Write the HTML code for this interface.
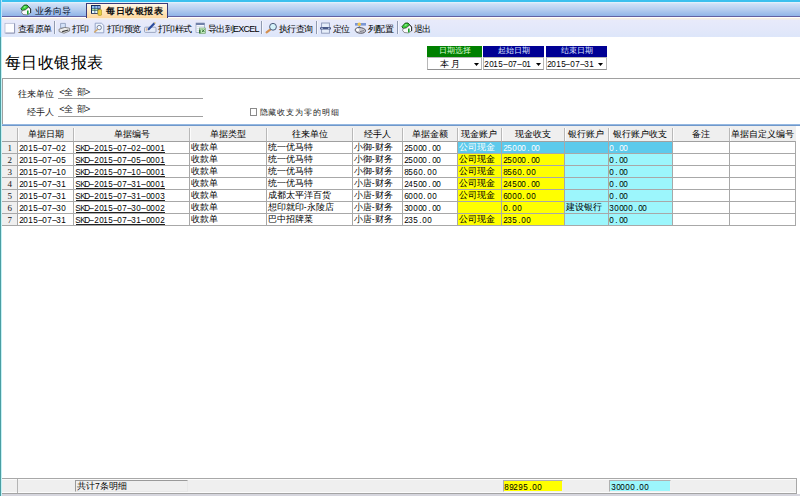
<!DOCTYPE html>
<html><head><meta charset="utf-8">
<style>
*{margin:0;padding:0;box-sizing:border-box}
html,body{width:800px;height:496px;overflow:hidden;background:#fff;font-family:"Liberation Sans",sans-serif;color:#000}
.a{position:absolute;white-space:nowrap}
#tealL{left:0;top:36.5px;width:2px;height:460px;background:linear-gradient(90deg,#4a9ea2 0,#4a9ea2 50%,#c4f2f6 50%,#c4f2f6 100%)}
#cyL{left:0;top:0;width:2px;height:36.5px;background:linear-gradient(90deg,#48bce8 0,#48bce8 55%,#bfe6fa 55%,#bfe6fa 100%)}
#topc{left:0;top:0;width:800px;height:2px;background:#3cc0ee}
#tabs{left:0;top:2px;width:800px;height:14.5px;background:linear-gradient(#e6f6ff 0,#d0e0f6 12%,#b6cef0 50%,#8ab0e6 100%)}
#tabline{left:0;top:16.1px;width:800px;height:1.4px;background:#6262a2}
#tb{left:0;top:17.5px;width:800px;height:19px;background:linear-gradient(#faf0da 0,#e8eafa 12%,#e3e8fa 60%,#dde6fa 100%)}
#atab{left:86px;top:3px;width:82px;height:15px;border:1.3px solid #3a3a78;border-bottom:none;background:linear-gradient(#fff6e6,#ffe6bc 60%,#ffd89c)}
.tbt{font-size:9px;letter-spacing:-0.7px;line-height:10px;color:#000;font-weight:500}
.sep{width:1px;height:13px;background:#909ab0;top:21.3px;box-shadow:1px 0 0 #f4f6fc}
.mono{font-family:"Liberation Mono",monospace;font-size:9px;line-height:11px;letter-spacing:-0.69px}
.cj{font-size:8.7px;line-height:11px;font-weight:500}
.nm{font-size:9px;line-height:11px}
.nm i{font-style:normal;display:inline-block;width:4.71px;text-align:center;transform:scaleX(.9)}
.hd{font-size:8.7px;line-height:12px;text-align:center;color:#000;font-weight:500}
.lbl{font-size:9px;line-height:11px;color:#222}
</style></head><body>
<div class="a" id="tabs"></div>
<div class="a" id="tabline"></div>
<div class="a" id="tb"></div>
<div class="a" id="atab"></div>
<div class="a" id="topc"></div>

<!-- tab texts -->
<div class="a" style="left:35px;top:5px;font-size:9.4px;line-height:12px;color:#08122c;font-weight:500">业务向导</div>
<div class="a" style="left:106px;top:5px;font-size:9.4px;letter-spacing:0.5px;line-height:12px;font-weight:bold;color:#101010">每日收银报表</div>

<!-- toolbar texts -->
<div class="a tbt" style="left:18px;top:23.8px">查看原单</div>
<div class="a sep" style="left:54px"></div>
<div class="a tbt" style="left:72px;top:23.8px">打印</div>
<div class="a tbt" style="left:107px;top:23.8px">打印预览</div>
<div class="a tbt" style="left:158px;top:23.8px">打印样式</div>
<div class="a tbt" style="left:208px;top:23.8px">导出到EXCEL</div>
<div class="a sep" style="left:261px"></div>
<div class="a tbt" style="left:279px;top:23.8px">执行查询</div>
<div class="a sep" style="left:315.5px"></div>
<div class="a tbt" style="left:333px;top:23.8px">定位</div>
<div class="a tbt" style="left:368px;top:23.8px">列配置</div>
<div class="a sep" style="left:396.5px"></div>
<div class="a tbt" style="left:414px;top:23.8px">退出</div>


<!-- icons -->
<svg class="a" style="left:17.6px;top:2.1px" width="16" height="16" viewBox="0 0 16 16"><path d="M3 6.6L6.2 3.1L9 3L10.8 5L7.2 8L4.2 8.6Z" fill="#3ccf3c" stroke="#0e4a10" stroke-width="0.9" stroke-linejoin="round"/><path d="M5.2 5.2L6.8 4L8.4 4.4L6.6 6Z" fill="#8af08a"/><path d="M4.2 8.6L7.2 8L10.8 5L12.6 7L12.6 11L9.2 12.9L5.2 12.5L3.6 10.4Z" fill="#fafafa" stroke="#4a4a4a" stroke-width="0.6" stroke-linejoin="round"/><path d="M9 8.6H10.6V12.2L9 12.6Z" fill="#16a028"/><path d="M10.8 5L12.6 7V11" fill="none" stroke="#202020" stroke-width="0.9"/></svg>
<svg class="a" style="left:86px;top:2px" width="16" height="16" viewBox="0 0 16 16">
<rect x="5" y="3" width="9.5" height="8.8" fill="#152a5a"/>
<rect x="6" y="4" width="2.6" height="2.4" fill="#8cc0f4"/><rect x="9.2" y="4" width="2.4" height="2.4" fill="#8cc0f4"/><rect x="12.2" y="4" width="1.6" height="2.4" fill="#a8c8ff"/>
<rect x="6" y="6.8" width="2.6" height="1.8" fill="#a8e0a0"/><rect x="9.2" y="6.8" width="2.4" height="1.8" fill="#a8e0a0"/>
<rect x="6" y="9" width="2.6" height="2" fill="#e8fcff"/><rect x="9.2" y="9" width="2.4" height="2" fill="#e8fcff"/>
<rect x="11.9" y="7.6" width="3.8" height="5.8" rx="1.2" fill="#e8d040" stroke="#a88a20" stroke-width="0.6"/>
</svg>
<svg class="a" style="left:2px;top:20px" width="16" height="16" viewBox="0 0 16 16">
<rect x="3" y="3.3" width="9.6" height="9.8" fill="#fdfdff" stroke="#aab2cc" stroke-width="0.7"/>
<path d="M12.6 3.5V13.1H3.5" fill="none" stroke="#8a92b0" stroke-width="0.9"/>
</svg>
<svg class="a" style="left:56px;top:20px" width="16" height="16" viewBox="0 0 16 16">
<path d="M4.6 3.4H9.4V8H4.6Z" fill="#d4e2f8" stroke="#8898b8" stroke-width="0.8"/>
<path d="M3 9.2L8.8 7.4L13.6 8.2V11L8 13.2L3.2 11.6Z" fill="#ececec" stroke="#707070" stroke-width="0.8" stroke-linejoin="round"/>
<path d="M6.2 11.6L12.4 10" stroke="#383838" stroke-width="1.1"/>
</svg>
<svg class="a" style="left:92px;top:20px" width="16" height="16" viewBox="0 0 16 16">
<path d="M3.2 3.2H9.4L11.8 5.4V12.8H3.2Z" fill="#eef4fc" stroke="#8494bc" stroke-width="0.8"/>
<circle cx="7.2" cy="7.6" r="2.2" fill="#f4f8ff" stroke="#5a6888" stroke-width="0.8"/>
<path d="M5.6 9.4L2.6 12" stroke="#d4a868" stroke-width="1.4" stroke-linecap="round"/>
</svg>
<svg class="a" style="left:142px;top:20px" width="16" height="16" viewBox="0 0 16 16">
<rect x="2.5" y="7.2" width="11.5" height="5.2" rx="1" fill="#e4ecfa" stroke="#8a96b4" stroke-width="0.8"/>
<path d="M6.6 9.2L12.2 3.4" stroke="#2c4c9c" stroke-width="2.2" stroke-linecap="round"/>
<circle cx="13" cy="2.8" r="0.9" fill="#f0d890"/>
<rect x="3.8" y="8.2" width="1.6" height="2.6" fill="#e0b898"/>
</svg>
<svg class="a" style="left:193px;top:20px" width="16" height="16" viewBox="0 0 16 16">
<rect x="3" y="3" width="8.6" height="9.4" fill="#f4f8fc" stroke="#8090b0" stroke-width="0.6"/>
<rect x="3" y="3" width="8.6" height="2" fill="#7080a8"/>
<path d="M3.4 6.6H11M3.4 8.6H11M3.4 10.6H6" stroke="#c8d0e0" stroke-width="0.6"/>
<rect x="6.6" y="8" width="5.8" height="5.6" fill="#c4ecc0" stroke="#6a9a6a" stroke-width="0.6"/>
<rect x="6" y="9.6" width="1.6" height="3.6" fill="#3a7a3a"/>
<path d="M9 9.4L11.6 12.2M11.4 9.4L9 12.2" stroke="#2a6a2a" stroke-width="0.9"/>
</svg>
<svg class="a" style="left:263px;top:20px" width="16" height="16" viewBox="0 0 16 16">
<path d="M7.2 9.6L3.6 12.4" stroke="#d49050" stroke-width="2.2" stroke-linecap="round"/>
<circle cx="10" cy="6.8" r="3.4" fill="#d4f2fa" stroke="#4a5a7a" stroke-width="1"/>
</svg>
<svg class="a" style="left:318px;top:20px" width="16" height="16" viewBox="0 0 16 16">
<rect x="3.6" y="3" width="7.8" height="10.2" fill="#e6eefa" stroke="#8a96b6" stroke-width="0.9"/>
<rect x="2" y="7" width="11" height="2.6" rx="1.2" fill="#4a5a88"/>
<rect x="3.2" y="7.8" width="1.6" height="1" fill="#c8d4f0"/><rect x="10" y="7.8" width="1.6" height="1" fill="#c8d4f0"/>
</svg>
<svg class="a" style="left:352px;top:20px" width="16" height="16" viewBox="0 0 16 16">
<rect x="3" y="3" width="11" height="2.6" fill="#7a96d4"/>
<circle cx="7.3" cy="4.3" r="1.7" fill="#f2c64a"/>
<path d="M7.4 6V8.5" stroke="#6a9ae0" stroke-width="1.4"/>
<path d="M3.4 9.2C4.2 7.4 7 7.2 9.6 7.8C12.4 8.4 14 9.6 13.4 11.4C12.6 13.2 9.4 13.6 6.6 13C4.2 12.4 2.8 11 3.4 9.2Z" fill="#c8c8d0" stroke="#4a4a56" stroke-width="0.9"/>
<ellipse cx="5.6" cy="9.8" rx="1.5" ry="1.5" fill="#fff"/>
<path d="M8 11.6L12 10.6" stroke="#6a6a74" stroke-width="0.8"/>
</svg>
<svg class="a" style="left:399px;top:20px" width="16" height="16" viewBox="0 0 16 16"><path d="M3 6.6L6.2 3.1L9 3L10.8 5L7.2 8L4.2 8.6Z" fill="#3ccf3c" stroke="#0e4a10" stroke-width="0.9" stroke-linejoin="round"/><path d="M5.2 5.2L6.8 4L8.4 4.4L6.6 6Z" fill="#8af08a"/><path d="M4.2 8.6L7.2 8L10.8 5L12.6 7L12.6 11L9.2 12.9L5.2 12.5L3.6 10.4Z" fill="#fafafa" stroke="#4a4a4a" stroke-width="0.6" stroke-linejoin="round"/><path d="M9 8.6H10.6V12.2L9 12.6Z" fill="#16a028"/><path d="M10.8 5L12.6 7V11" fill="none" stroke="#202020" stroke-width="0.9"/></svg>

<!-- title -->
<div class="a" style="left:5px;top:51.5px;font-size:16.4px;letter-spacing:0.4px;line-height:20px;color:#000;font-weight:500">每日收银报表</div>

<!-- date selector -->
<div class="a" style="left:427px;top:46px;width:55px;height:10.5px;background:#008000"></div>
<div class="a" style="left:483px;top:46px;width:61.2px;height:10.5px;background:#000094"></div>
<div class="a" style="left:546px;top:46px;width:61px;height:10.5px;background:#000094"></div>
<div class="a" style="left:427px;top:45px;width:55px;text-align:center;font-size:8.1px;line-height:12px;color:#dcffd4;font-weight:500">日期选择</div>
<div class="a" style="left:483px;top:45px;width:61.2px;text-align:center;font-size:8.1px;line-height:12px;color:#dce4ff;font-weight:500">起始日期</div>
<div class="a" style="left:546px;top:45px;width:61px;text-align:center;font-size:8.1px;line-height:12px;color:#dce4ff;font-weight:500">结束日期</div>
<div class="a" style="left:427px;top:57px;width:55px;height:13px;border:1px solid #b8b8b8;border-bottom-color:#909090"></div>
<div class="a" style="left:483px;top:57px;width:61.2px;height:13px;border:1px solid #b8b8b8;border-bottom-color:#909090"></div>
<div class="a" style="left:546px;top:57px;width:61px;height:13px;border:1px solid #b8b8b8;border-bottom-color:#909090"></div>
<div class="a cj" style="left:440px;top:58.5px;letter-spacing:1.5px">本月</div>
<div class="a nm" style="left:484px;top:58.6px"><i>2</i><i>0</i><i>1</i><i>5</i><i>&#8211;</i><i>0</i><i>7</i><i>&#8211;</i><i>0</i><i>1</i></div>
<div class="a nm" style="left:546.6px;top:58.6px"><i>2</i><i>0</i><i>1</i><i>5</i><i>&#8211;</i><i>0</i><i>7</i><i>&#8211;</i><i>3</i><i>1</i></div>
<svg class="a" style="left:473.5px;top:62.5px" width="5" height="3"><path d="M0 0H5L2.5 3Z" fill="#000"/></svg>
<svg class="a" style="left:536px;top:62.5px" width="5" height="3"><path d="M0 0H5L2.5 3Z" fill="#000"/></svg>
<svg class="a" style="left:598px;top:62.5px" width="5" height="3"><path d="M0 0H5L2.5 3Z" fill="#000"/></svg>

<!-- filter box -->
<div class="a" style="left:2px;top:78px;width:798px;height:1px;background:#a0a0a0"></div>
<div class="a" style="left:2px;top:78px;width:1px;height:47px;background:#a0a0a0"></div>
<div class="a lbl" style="left:18px;top:89px">往来单位</div>
<div class="a lbl" style="left:27px;top:106.5px">经手人</div>
<div class="a lbl" style="left:59.3px;top:87px;letter-spacing:-0.5px;color:#222">&lt;全&nbsp;&nbsp;部&gt;</div>
<div class="a lbl" style="left:59.3px;top:104px;letter-spacing:-0.5px;color:#222">&lt;全&nbsp;&nbsp;部&gt;</div>
<div class="a" style="left:57.5px;top:98px;width:145.5px;height:1px;background:#a0a0a0"></div>
<div class="a" style="left:57.5px;top:116px;width:145.5px;height:1px;background:#a0a0a0"></div>
<div class="a" style="left:249.5px;top:108px;width:7.2px;height:7.5px;border:0.9px solid #8a8a8a;background:#fff"></div>
<div class="a lbl" style="left:259.5px;top:107px;font-size:8.2px;letter-spacing:0.9px;color:#1a1a1a">隐藏收支为零的明细</div>

<div class="a" style="left:1.3px;top:126px;width:795px;height:15px;background:#efefef"></div>
<div class="a" style="left:2px;top:124.2px;width:798px;height:1.8px;background:linear-gradient(#a8c8ec,#5c88c0)"></div>
<div class="a" style="left:2px;top:141.2px;width:15.5px;height:12px;background:#efefef"></div>
<div class="a" style="left:457.5px;top:141.2px;width:43.8px;height:12px;background:#5ccaec"></div>
<div class="a" style="left:501.3px;top:141.2px;width:63.2px;height:12px;background:#5ccaec"></div>
<div class="a" style="left:564.5px;top:141.2px;width:43.6px;height:12px;background:#5ccaec"></div>
<div class="a" style="left:608.1px;top:141.2px;width:64.2px;height:12px;background:#5ccaec"></div>
<div class="a" style="left:2px;top:153.2px;width:15.5px;height:12px;background:#efefef"></div>
<div class="a" style="left:457.5px;top:153.2px;width:43.8px;height:12px;background:#ffff00"></div>
<div class="a" style="left:501.3px;top:153.2px;width:63.2px;height:12px;background:#ffff00"></div>
<div class="a" style="left:564.5px;top:153.2px;width:43.6px;height:12px;background:#9cf6fc"></div>
<div class="a" style="left:608.1px;top:153.2px;width:64.2px;height:12px;background:#9cf6fc"></div>
<div class="a" style="left:2px;top:165.2px;width:15.5px;height:12px;background:#efefef"></div>
<div class="a" style="left:457.5px;top:165.2px;width:43.8px;height:12px;background:#ffff00"></div>
<div class="a" style="left:501.3px;top:165.2px;width:63.2px;height:12px;background:#ffff00"></div>
<div class="a" style="left:564.5px;top:165.2px;width:43.6px;height:12px;background:#9cf6fc"></div>
<div class="a" style="left:608.1px;top:165.2px;width:64.2px;height:12px;background:#9cf6fc"></div>
<div class="a" style="left:2px;top:177.2px;width:15.5px;height:12px;background:#efefef"></div>
<div class="a" style="left:457.5px;top:177.2px;width:43.8px;height:12px;background:#ffff00"></div>
<div class="a" style="left:501.3px;top:177.2px;width:63.2px;height:12px;background:#ffff00"></div>
<div class="a" style="left:564.5px;top:177.2px;width:43.6px;height:12px;background:#9cf6fc"></div>
<div class="a" style="left:608.1px;top:177.2px;width:64.2px;height:12px;background:#9cf6fc"></div>
<div class="a" style="left:2px;top:189.2px;width:15.5px;height:12px;background:#efefef"></div>
<div class="a" style="left:457.5px;top:189.2px;width:43.8px;height:12px;background:#ffff00"></div>
<div class="a" style="left:501.3px;top:189.2px;width:63.2px;height:12px;background:#ffff00"></div>
<div class="a" style="left:564.5px;top:189.2px;width:43.6px;height:12px;background:#9cf6fc"></div>
<div class="a" style="left:608.1px;top:189.2px;width:64.2px;height:12px;background:#9cf6fc"></div>
<div class="a" style="left:2px;top:201.2px;width:15.5px;height:12px;background:#efefef"></div>
<div class="a" style="left:457.5px;top:201.2px;width:43.8px;height:12px;background:#ffff00"></div>
<div class="a" style="left:501.3px;top:201.2px;width:63.2px;height:12px;background:#ffff00"></div>
<div class="a" style="left:564.5px;top:201.2px;width:43.6px;height:12px;background:#9cf6fc"></div>
<div class="a" style="left:608.1px;top:201.2px;width:64.2px;height:12px;background:#9cf6fc"></div>
<div class="a" style="left:2px;top:213.2px;width:15.5px;height:12px;background:#efefef"></div>
<div class="a" style="left:457.5px;top:213.2px;width:43.8px;height:12px;background:#ffff00"></div>
<div class="a" style="left:501.3px;top:213.2px;width:63.2px;height:12px;background:#ffff00"></div>
<div class="a" style="left:564.5px;top:213.2px;width:43.6px;height:12px;background:#9cf6fc"></div>
<div class="a" style="left:608.1px;top:213.2px;width:64.2px;height:12px;background:#9cf6fc"></div>
<div class="a" style="left:1.3px;top:141px;width:794.7px;height:1px;background:#a0a0a0"></div>
<div class="a" style="left:17px;top:128px;width:1px;height:13px;background:#b8b8b8"></div><div class="a" style="left:18px;top:128px;width:1px;height:13px;background:#fcfcfc"></div>
<div class="a" style="left:73px;top:128px;width:1px;height:13px;background:#b8b8b8"></div><div class="a" style="left:74px;top:128px;width:1px;height:13px;background:#fcfcfc"></div>
<div class="a" style="left:189px;top:128px;width:1px;height:13px;background:#b8b8b8"></div><div class="a" style="left:190px;top:128px;width:1px;height:13px;background:#fcfcfc"></div>
<div class="a" style="left:266px;top:128px;width:1px;height:13px;background:#b8b8b8"></div><div class="a" style="left:267px;top:128px;width:1px;height:13px;background:#fcfcfc"></div>
<div class="a" style="left:352px;top:128px;width:1px;height:13px;background:#b8b8b8"></div><div class="a" style="left:353px;top:128px;width:1px;height:13px;background:#fcfcfc"></div>
<div class="a" style="left:402px;top:128px;width:1px;height:13px;background:#b8b8b8"></div><div class="a" style="left:403px;top:128px;width:1px;height:13px;background:#fcfcfc"></div>
<div class="a" style="left:457px;top:128px;width:1px;height:13px;background:#b8b8b8"></div><div class="a" style="left:458px;top:128px;width:1px;height:13px;background:#fcfcfc"></div>
<div class="a" style="left:501px;top:128px;width:1px;height:13px;background:#b8b8b8"></div><div class="a" style="left:502px;top:128px;width:1px;height:13px;background:#fcfcfc"></div>
<div class="a" style="left:564px;top:128px;width:1px;height:13px;background:#b8b8b8"></div><div class="a" style="left:565px;top:128px;width:1px;height:13px;background:#fcfcfc"></div>
<div class="a" style="left:608px;top:128px;width:1px;height:13px;background:#b8b8b8"></div><div class="a" style="left:609px;top:128px;width:1px;height:13px;background:#fcfcfc"></div>
<div class="a" style="left:672px;top:128px;width:1px;height:13px;background:#b8b8b8"></div><div class="a" style="left:673px;top:128px;width:1px;height:13px;background:#fcfcfc"></div>
<div class="a" style="left:729px;top:128px;width:1px;height:13px;background:#b8b8b8"></div><div class="a" style="left:730px;top:128px;width:1px;height:13px;background:#fcfcfc"></div>
<div class="a" style="left:76px;top:151.5px;width:88.6px;height:0.9px;background:#222"></div>
<div class="a" style="left:1.3px;top:153px;width:794.7px;height:1px;background:#a8a8a8"></div>
<div class="a" style="left:76px;top:163.5px;width:88.6px;height:0.9px;background:#222"></div>
<div class="a" style="left:1.3px;top:165px;width:794.7px;height:1px;background:#a8a8a8"></div>
<div class="a" style="left:76px;top:175.5px;width:88.6px;height:0.9px;background:#222"></div>
<div class="a" style="left:1.3px;top:177px;width:794.7px;height:1px;background:#a8a8a8"></div>
<div class="a" style="left:76px;top:187.5px;width:88.6px;height:0.9px;background:#222"></div>
<div class="a" style="left:1.3px;top:189px;width:794.7px;height:1px;background:#a8a8a8"></div>
<div class="a" style="left:76px;top:199.5px;width:88.6px;height:0.9px;background:#222"></div>
<div class="a" style="left:1.3px;top:201px;width:794.7px;height:1px;background:#a8a8a8"></div>
<div class="a" style="left:76px;top:211.5px;width:88.6px;height:0.9px;background:#222"></div>
<div class="a" style="left:1.3px;top:213px;width:794.7px;height:1px;background:#a8a8a8"></div>
<div class="a" style="left:76px;top:223.5px;width:88.6px;height:0.9px;background:#222"></div>
<div class="a" style="left:1.3px;top:225px;width:794.7px;height:1px;background:#a8a8a8"></div>
<div class="a" style="left:17px;top:141px;width:1px;height:85px;background:#a8a8a8"></div>
<div class="a" style="left:73px;top:141px;width:1px;height:85px;background:#a8a8a8"></div>
<div class="a" style="left:189px;top:141px;width:1px;height:85px;background:#a8a8a8"></div>
<div class="a" style="left:266px;top:141px;width:1px;height:85px;background:#a8a8a8"></div>
<div class="a" style="left:352px;top:141px;width:1px;height:85px;background:#a8a8a8"></div>
<div class="a" style="left:402px;top:141px;width:1px;height:85px;background:#a8a8a8"></div>
<div class="a" style="left:457px;top:141px;width:1px;height:85px;background:#a8a8a8"></div>
<div class="a" style="left:501px;top:141px;width:1px;height:85px;background:#a8a8a8"></div>
<div class="a" style="left:564px;top:141px;width:1px;height:85px;background:#a8a8a8"></div>
<div class="a" style="left:608px;top:141px;width:1px;height:85px;background:#a8a8a8"></div>
<div class="a" style="left:672px;top:141px;width:1px;height:85px;background:#a8a8a8"></div>
<div class="a" style="left:729px;top:141px;width:1px;height:85px;background:#a8a8a8"></div>
<div class="a" style="left:795px;top:141px;width:1px;height:85px;background:#a8a8a8"></div>
<div class="a hd" style="left:17.5px;top:127.5px;width:56.3px">单据日期</div>
<div class="a hd" style="left:73.8px;top:127.5px;width:115.7px">单据编号</div>
<div class="a hd" style="left:189.5px;top:127.5px;width:77px">单据类型</div>
<div class="a hd" style="left:266.5px;top:127.5px;width:86px">往来单位</div>
<div class="a hd" style="left:352.5px;top:127.5px;width:49.8px">经手人</div>
<div class="a hd" style="left:402.3px;top:127.5px;width:55.2px">单据金额</div>
<div class="a hd" style="left:457.5px;top:127.5px;width:43.8px">现金账户</div>
<div class="a hd" style="left:501.3px;top:127.5px;width:63.2px">现金收支</div>
<div class="a hd" style="left:564.5px;top:127.5px;width:43.6px">银行账户</div>
<div class="a hd" style="left:608.1px;top:127.5px;width:64.2px">银行账户收支</div>
<div class="a hd" style="left:672.3px;top:127.5px;width:57.2px">备注</div>
<div class="a hd" style="left:729.5px;top:127.5px;width:66.5px">单据自定义编号</div>
<div class="a nm" style="left:2px;top:142.5px;width:15.5px;text-align:center;font-family:'Liberation Serif',serif;font-size:9px;color:#1a1a1a">1</div>
<div class="a nm" style="left:18.7px;top:142.8px;color:#000;"><i>2</i><i>0</i><i>1</i><i>5</i><i>&#8211;</i><i>0</i><i>7</i><i>&#8211;</i><i>0</i><i>2</i></div>
<div class="a nm" style="left:75px;top:142.8px;color:#000;"><i>S</i><i>K</i><i>D</i><i>&#8211;</i><i>2</i><i>0</i><i>1</i><i>5</i><i>&#8211;</i><i>0</i><i>7</i><i>&#8211;</i><i>0</i><i>2</i><i>&#8211;</i><i>0</i><i>0</i><i>0</i><i>1</i></div>
<div class="a cj" style="left:190.7px;top:142px;color:#000;">收款单</div>
<div class="a cj" style="left:267.7px;top:142px;color:#000;">统一优马特</div>
<div class="a cj" style="left:353.7px;top:142px;color:#000;">小御-财务</div>
<div class="a nm" style="left:403.5px;top:142.8px;color:#000;"><i>2</i><i>5</i><i>0</i><i>0</i><i>0</i><i>.</i><i>0</i><i>0</i></div>
<div class="a cj" style="left:458.7px;top:142px;color:#fff;">公司现金</div>
<div class="a nm" style="left:502.5px;top:142.8px;color:#fff;"><i>2</i><i>5</i><i>0</i><i>0</i><i>0</i><i>.</i><i>0</i><i>0</i></div>
<div class="a nm" style="left:609.3px;top:142.8px;color:#fff;"><i>0</i><i>.</i><i>0</i><i>0</i></div>
<div class="a nm" style="left:2px;top:154.5px;width:15.5px;text-align:center;font-family:'Liberation Serif',serif;font-size:9px;color:#1a1a1a">2</div>
<div class="a nm" style="left:18.7px;top:154.8px;color:#000;"><i>2</i><i>0</i><i>1</i><i>5</i><i>&#8211;</i><i>0</i><i>7</i><i>&#8211;</i><i>0</i><i>5</i></div>
<div class="a nm" style="left:75px;top:154.8px;color:#000;"><i>S</i><i>K</i><i>D</i><i>&#8211;</i><i>2</i><i>0</i><i>1</i><i>5</i><i>&#8211;</i><i>0</i><i>7</i><i>&#8211;</i><i>0</i><i>5</i><i>&#8211;</i><i>0</i><i>0</i><i>0</i><i>1</i></div>
<div class="a cj" style="left:190.7px;top:154px;color:#000;">收款单</div>
<div class="a cj" style="left:267.7px;top:154px;color:#000;">统一优马特</div>
<div class="a cj" style="left:353.7px;top:154px;color:#000;">小御-财务</div>
<div class="a nm" style="left:403.5px;top:154.8px;color:#000;"><i>2</i><i>5</i><i>0</i><i>0</i><i>0</i><i>.</i><i>0</i><i>0</i></div>
<div class="a cj" style="left:458.7px;top:154px;color:#000;">公司现金</div>
<div class="a nm" style="left:502.5px;top:154.8px;color:#000;"><i>2</i><i>5</i><i>0</i><i>0</i><i>0</i><i>.</i><i>0</i><i>0</i></div>
<div class="a nm" style="left:609.3px;top:154.8px;color:#000;"><i>0</i><i>.</i><i>0</i><i>0</i></div>
<div class="a nm" style="left:2px;top:166.5px;width:15.5px;text-align:center;font-family:'Liberation Serif',serif;font-size:9px;color:#1a1a1a">3</div>
<div class="a nm" style="left:18.7px;top:166.8px;color:#000;"><i>2</i><i>0</i><i>1</i><i>5</i><i>&#8211;</i><i>0</i><i>7</i><i>&#8211;</i><i>1</i><i>0</i></div>
<div class="a nm" style="left:75px;top:166.8px;color:#000;"><i>S</i><i>K</i><i>D</i><i>&#8211;</i><i>2</i><i>0</i><i>1</i><i>5</i><i>&#8211;</i><i>0</i><i>7</i><i>&#8211;</i><i>1</i><i>0</i><i>&#8211;</i><i>0</i><i>0</i><i>0</i><i>1</i></div>
<div class="a cj" style="left:190.7px;top:166px;color:#000;">收款单</div>
<div class="a cj" style="left:267.7px;top:166px;color:#000;">统一优马特</div>
<div class="a cj" style="left:353.7px;top:166px;color:#000;">小御-财务</div>
<div class="a nm" style="left:403.5px;top:166.8px;color:#000;"><i>8</i><i>5</i><i>6</i><i>0</i><i>.</i><i>0</i><i>0</i></div>
<div class="a cj" style="left:458.7px;top:166px;color:#000;">公司现金</div>
<div class="a nm" style="left:502.5px;top:166.8px;color:#000;"><i>8</i><i>5</i><i>6</i><i>0</i><i>.</i><i>0</i><i>0</i></div>
<div class="a nm" style="left:609.3px;top:166.8px;color:#000;"><i>0</i><i>.</i><i>0</i><i>0</i></div>
<div class="a nm" style="left:2px;top:178.5px;width:15.5px;text-align:center;font-family:'Liberation Serif',serif;font-size:9px;color:#1a1a1a">4</div>
<div class="a nm" style="left:18.7px;top:178.8px;color:#000;"><i>2</i><i>0</i><i>1</i><i>5</i><i>&#8211;</i><i>0</i><i>7</i><i>&#8211;</i><i>3</i><i>1</i></div>
<div class="a nm" style="left:75px;top:178.8px;color:#000;"><i>S</i><i>K</i><i>D</i><i>&#8211;</i><i>2</i><i>0</i><i>1</i><i>5</i><i>&#8211;</i><i>0</i><i>7</i><i>&#8211;</i><i>3</i><i>1</i><i>&#8211;</i><i>0</i><i>0</i><i>0</i><i>1</i></div>
<div class="a cj" style="left:190.7px;top:178px;color:#000;">收款单</div>
<div class="a cj" style="left:267.7px;top:178px;color:#000;">统一优马特</div>
<div class="a cj" style="left:353.7px;top:178px;color:#000;">小唐-财务</div>
<div class="a nm" style="left:403.5px;top:178.8px;color:#000;"><i>2</i><i>4</i><i>5</i><i>0</i><i>0</i><i>.</i><i>0</i><i>0</i></div>
<div class="a cj" style="left:458.7px;top:178px;color:#000;">公司现金</div>
<div class="a nm" style="left:502.5px;top:178.8px;color:#000;"><i>2</i><i>4</i><i>5</i><i>0</i><i>0</i><i>.</i><i>0</i><i>0</i></div>
<div class="a nm" style="left:609.3px;top:178.8px;color:#000;"><i>0</i><i>.</i><i>0</i><i>0</i></div>
<div class="a nm" style="left:2px;top:190.5px;width:15.5px;text-align:center;font-family:'Liberation Serif',serif;font-size:9px;color:#1a1a1a">5</div>
<div class="a nm" style="left:18.7px;top:190.8px;color:#000;"><i>2</i><i>0</i><i>1</i><i>5</i><i>&#8211;</i><i>0</i><i>7</i><i>&#8211;</i><i>3</i><i>1</i></div>
<div class="a nm" style="left:75px;top:190.8px;color:#000;"><i>S</i><i>K</i><i>D</i><i>&#8211;</i><i>2</i><i>0</i><i>1</i><i>5</i><i>&#8211;</i><i>0</i><i>7</i><i>&#8211;</i><i>3</i><i>1</i><i>&#8211;</i><i>0</i><i>0</i><i>0</i><i>3</i></div>
<div class="a cj" style="left:190.7px;top:190px;color:#000;">收款单</div>
<div class="a cj" style="left:267.7px;top:190px;color:#000;">成都太平洋百货</div>
<div class="a cj" style="left:353.7px;top:190px;color:#000;">小唐-财务</div>
<div class="a nm" style="left:403.5px;top:190.8px;color:#000;"><i>6</i><i>0</i><i>0</i><i>0</i><i>.</i><i>0</i><i>0</i></div>
<div class="a cj" style="left:458.7px;top:190px;color:#000;">公司现金</div>
<div class="a nm" style="left:502.5px;top:190.8px;color:#000;"><i>6</i><i>0</i><i>0</i><i>0</i><i>.</i><i>0</i><i>0</i></div>
<div class="a nm" style="left:609.3px;top:190.8px;color:#000;"><i>0</i><i>.</i><i>0</i><i>0</i></div>
<div class="a nm" style="left:2px;top:202.5px;width:15.5px;text-align:center;font-family:'Liberation Serif',serif;font-size:9px;color:#1a1a1a">6</div>
<div class="a nm" style="left:18.7px;top:202.8px;color:#000;"><i>2</i><i>0</i><i>1</i><i>5</i><i>&#8211;</i><i>0</i><i>7</i><i>&#8211;</i><i>3</i><i>0</i></div>
<div class="a nm" style="left:75px;top:202.8px;color:#000;"><i>S</i><i>K</i><i>D</i><i>&#8211;</i><i>2</i><i>0</i><i>1</i><i>5</i><i>&#8211;</i><i>0</i><i>7</i><i>&#8211;</i><i>3</i><i>0</i><i>&#8211;</i><i>0</i><i>0</i><i>0</i><i>2</i></div>
<div class="a cj" style="left:190.7px;top:202px;color:#000;">收款单</div>
<div class="a cj" style="left:267.7px;top:202px;color:#000;">想印就印-永陵店</div>
<div class="a cj" style="left:353.7px;top:202px;color:#000;">小唐-财务</div>
<div class="a nm" style="left:403.5px;top:202.8px;color:#000;"><i>3</i><i>0</i><i>0</i><i>0</i><i>0</i><i>.</i><i>0</i><i>0</i></div>
<div class="a nm" style="left:502.5px;top:202.8px;color:#000;"><i>0</i><i>.</i><i>0</i><i>0</i></div>
<div class="a cj" style="left:565.7px;top:202px;color:#000;">建设银行</div>
<div class="a nm" style="left:609.3px;top:202.8px;color:#000;"><i>3</i><i>0</i><i>0</i><i>0</i><i>0</i><i>.</i><i>0</i><i>0</i></div>
<div class="a nm" style="left:2px;top:214.5px;width:15.5px;text-align:center;font-family:'Liberation Serif',serif;font-size:9px;color:#1a1a1a">7</div>
<div class="a nm" style="left:18.7px;top:214.8px;color:#000;"><i>2</i><i>0</i><i>1</i><i>5</i><i>&#8211;</i><i>0</i><i>7</i><i>&#8211;</i><i>3</i><i>1</i></div>
<div class="a nm" style="left:75px;top:214.8px;color:#000;"><i>S</i><i>K</i><i>D</i><i>&#8211;</i><i>2</i><i>0</i><i>1</i><i>5</i><i>&#8211;</i><i>0</i><i>7</i><i>&#8211;</i><i>3</i><i>1</i><i>&#8211;</i><i>0</i><i>0</i><i>0</i><i>2</i></div>
<div class="a cj" style="left:190.7px;top:214px;color:#000;">收款单</div>
<div class="a cj" style="left:267.7px;top:214px;color:#000;">巴中招牌菜</div>
<div class="a cj" style="left:353.7px;top:214px;color:#000;">小唐-财务</div>
<div class="a nm" style="left:403.5px;top:214.8px;color:#000;"><i>2</i><i>3</i><i>5</i><i>.</i><i>0</i><i>0</i></div>
<div class="a cj" style="left:458.7px;top:214px;color:#000;">公司现金</div>
<div class="a nm" style="left:502.5px;top:214.8px;color:#000;"><i>2</i><i>3</i><i>5</i><i>.</i><i>0</i><i>0</i></div>
<div class="a nm" style="left:609.3px;top:214.8px;color:#000;"><i>0</i><i>.</i><i>0</i><i>0</i></div>

<!-- footer -->
<div class="a" style="left:1.3px;top:478.2px;width:795.5px;height:15.5px;background:#efefef"></div>
<div class="a" style="left:1.3px;top:478px;width:795.5px;height:1px;background:#a8a8a8"></div>
<div class="a" style="left:1.3px;top:479px;width:795px;height:0.8px;background:#fbfbfb"></div>
<div class="a" style="left:1.3px;top:492.4px;width:795px;height:0.8px;background:#fbfbfb"></div>
<div class="a" style="left:1.3px;top:493.2px;width:795.5px;height:1px;background:#a4a4a4"></div>
<div class="a" style="left:796px;top:478px;width:1px;height:16px;background:#a8a8a8"></div>
<div class="a" style="left:17px;top:479px;width:1px;height:14px;background:#b4b4b4"></div>
<div class="a" style="left:0;top:494.2px;width:800px;height:1.8px;background:#d6d6de"></div>
<div class="a" style="left:75.4px;top:480.2px;width:113px;height:11.8px;border:1px solid #9a9a9a;border-right-color:#e8e8e8;border-bottom-color:#e8e8e8"></div>
<div class="a cj" style="left:77px;top:480.5px;font-size:8.5px;font-weight:500">共计7条明细</div>
<div class="a" style="left:502.5px;top:480px;width:60.8px;height:12px;background:#ffff00;border:1px solid #b0b0b0;border-right-color:#f0f0f0;border-bottom-color:#f0f0f0"></div>
<div class="a nm" style="left:504px;top:481.5px"><i>8</i><i>9</i><i>2</i><i>9</i><i>5</i><i>.</i><i>0</i><i>0</i></div>
<div class="a" style="left:609.2px;top:480px;width:61.8px;height:12px;background:#9cf6fc;border:1px solid #b0b0b0;border-right-color:#f0f0f0;border-bottom-color:#f0f0f0"></div>
<div class="a nm" style="left:611px;top:481.5px"><i>3</i><i>0</i><i>0</i><i>0</i><i>0</i><i>.</i><i>0</i><i>0</i></div>

<div class="a" id="tealL"></div>
<div class="a" id="cyL"></div>
</body></html>
